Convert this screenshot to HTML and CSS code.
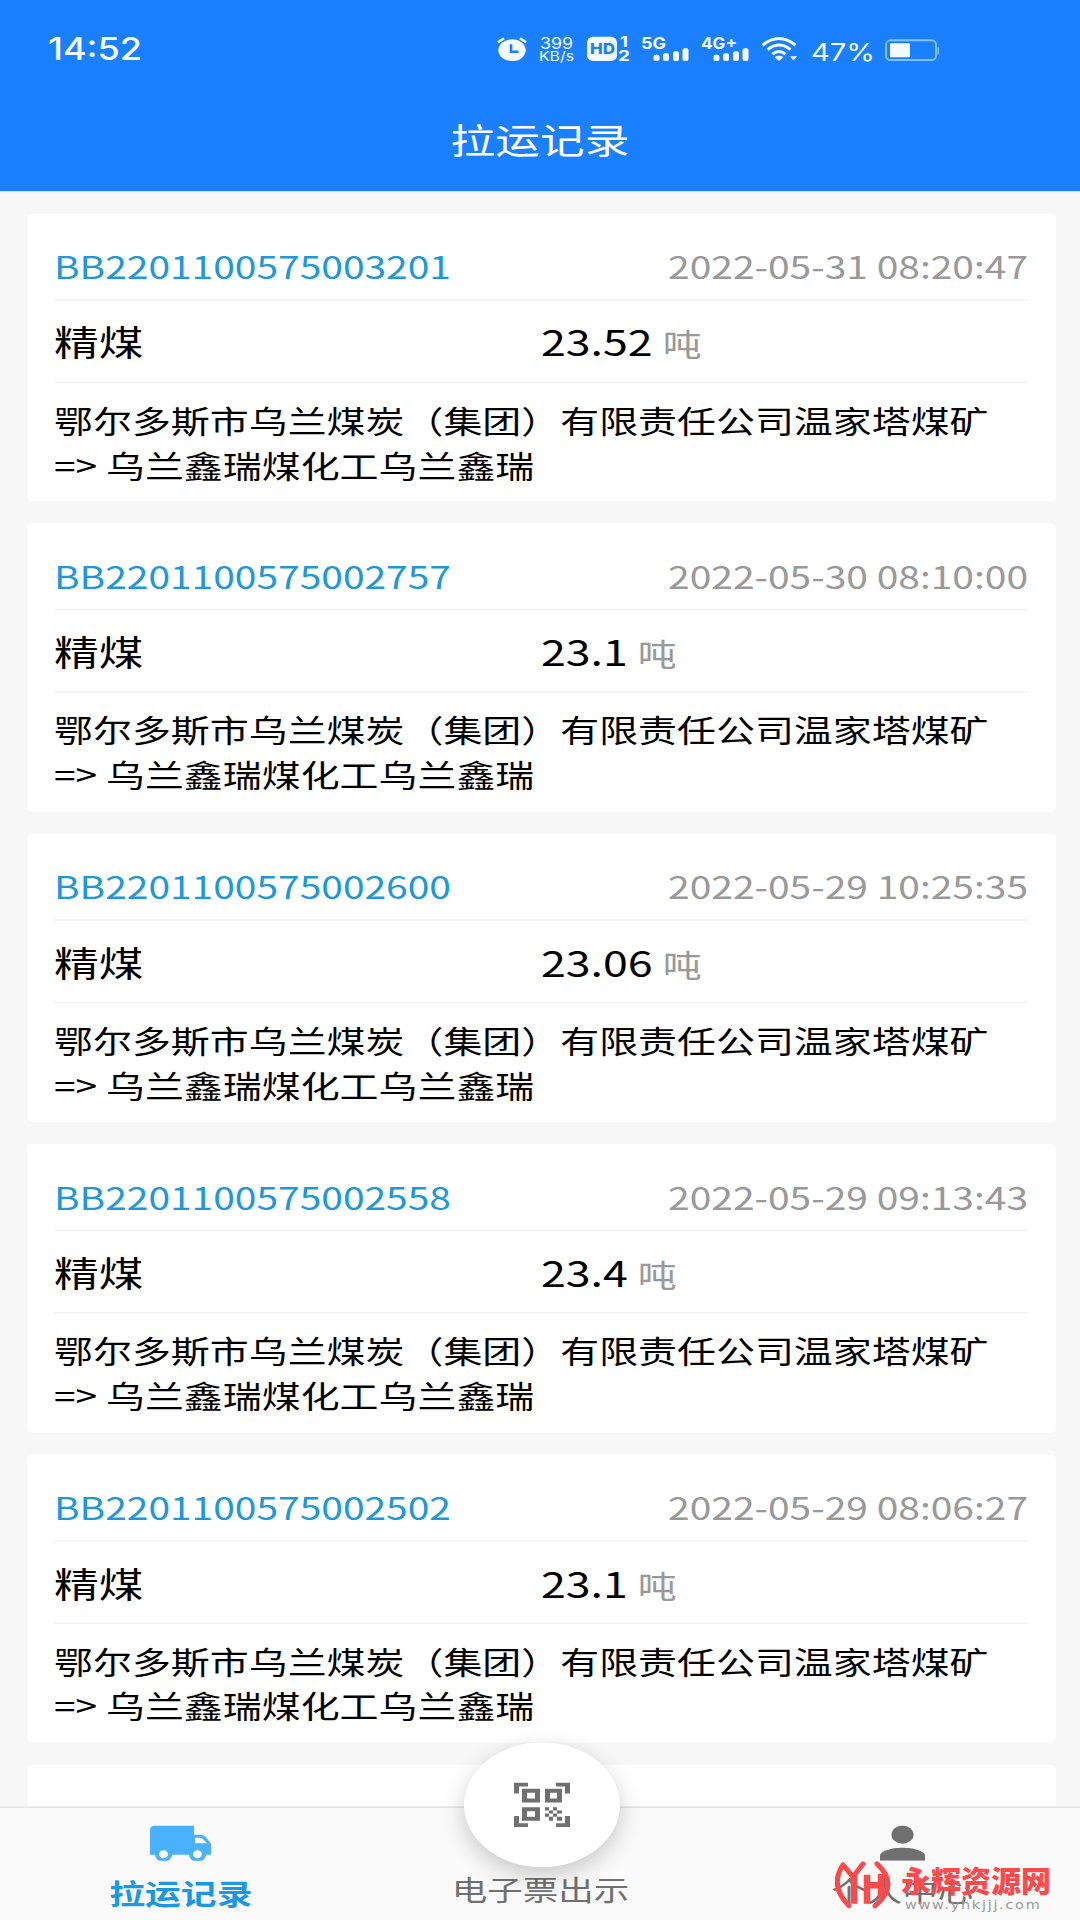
FILE: index.html
```html
<!DOCTYPE html>
<html lang="zh-CN">
<head>
<meta charset="utf-8">
<title>拉运记录</title>
<link rel="stylesheet" href="styles.css">
</head>
<body>
<div class="viewport">
<div class="screen">
  <header class="header">
    <div class="status">
      <svg class="clock" width="100" height="31" viewBox="0 0 100 25" preserveAspectRatio="none"><text x="0" y="23.5" font-size="31" textLength="94" lengthAdjust="spacingAndGlyphs">14:52</text></svg>
      <svg width="30" height="31" viewBox="0 0 30 25" preserveAspectRatio="none"><ellipse cx="15" cy="13.5" rx="13.7" ry="11"/><path class="line" d="M1 5.5 7 1.5M29 5.5 23 1.5" stroke-width="2.6"/><path class="cut" d="M14 7.500v7.500h7.500" stroke-width="2.600"/></svg>
      <svg width="36" height="31" viewBox="0 0 36 25" preserveAspectRatio="none"><text x="1" y="11.800" font-size="15.500" textLength="33" lengthAdjust="spacingAndGlyphs">399</text><text x="0" y="24.300" font-size="13.500" textLength="35" lengthAdjust="spacingAndGlyphs">KB/s</text></svg>
      <svg width="43" height="31" viewBox="0 0 43 25" preserveAspectRatio="none"><rect width="30" height="24.500" rx="6"/><text class="blue" x="3" y="17.700" font-size="15" textLength="25" lengthAdjust="spacingAndGlyphs">HD</text><text class="bold" x="33" y="10.500" font-size="14" textLength="8" lengthAdjust="spacingAndGlyphs">1</text><text class="bold" x="31" y="24" font-size="14" textLength="12" lengthAdjust="spacingAndGlyphs">2</text></svg>
      <svg width="47" height="31" viewBox="0 0 47 25" preserveAspectRatio="none"><text class="bold" x="-1" y="12.500" font-size="16" textLength="25" lengthAdjust="spacingAndGlyphs">5G</text><rect x="11.500" y="18" width="6" height="6.500" rx="2"/><rect x="21" y="16.500" width="6" height="8" rx="2"/><rect x="31" y="14.500" width="6" height="10" rx="2"/><rect x="40.500" y="11.500" width="6" height="13" rx="2"/></svg>
      <svg width="48" height="31" viewBox="0 0 48 25" preserveAspectRatio="none"><text class="bold" x="0" y="12.500" font-size="16" textLength="36" lengthAdjust="spacingAndGlyphs">4G+</text><rect x="12.500" y="18" width="6" height="6.500" rx="2"/><rect x="22" y="16.500" width="6" height="8" rx="2"/><rect x="32" y="14.500" width="6" height="10" rx="2"/><rect x="41.500" y="11.500" width="6" height="13" rx="2"/></svg>
      <svg width="39" height="31" viewBox="0 0 39 25" preserveAspectRatio="none"><path class="line" d="M1.500 8.500Q18-5 34.500 8.500M6.500 13Q18 3.500 29.500 13M11.500 17.500Q18 12 24.500 17.500" stroke-width="3"/><path d="M13.500 20.500Q18 17.500 22.500 20.500L18 24.500ZM29 19.500h7l-3.500 4.500z"/></svg>
      <svg width="61" height="31" viewBox="0 0 61 25" preserveAspectRatio="none"><text x="-1" y="24.500" font-size="25" textLength="64" lengthAdjust="spacingAndGlyphs">47%</text></svg>
      <svg width="55" height="31" viewBox="0 0 55 25" preserveAspectRatio="none"><rect class="case" x="1" y="3.500" width="50" height="20" rx="4.500"/><rect x="5" y="6.500" width="20" height="14" rx="1"/><path class="nub" d="M52.500 10.500h1.500v7h-1.500z"/></svg>
    </div>
    <h1 class="title">拉运记录</h1>
  </header>

  <main class="list">
    <article class="card">
      <div class="row head"><span class="code">BB2201100575003201</span><time class="date">2022-05-31 08:20:47</time></div>
      <div class="row goods"><span>精煤</span><span>23.52 <small class="unit">吨</small></span></div>
      <div class="route"><p>鄂尔多斯市乌兰煤炭（集团）有限责任公司温家塔煤矿</p><p>=&gt; 乌兰鑫瑞煤化工乌兰鑫瑞</p></div>
    </article>
    <article class="card">
      <div class="row head"><span class="code">BB2201100575002757</span><time class="date">2022-05-30 08:10:00</time></div>
      <div class="row goods"><span>精煤</span><span>23.1 <small class="unit">吨</small></span></div>
      <div class="route"><p>鄂尔多斯市乌兰煤炭（集团）有限责任公司温家塔煤矿</p><p>=&gt; 乌兰鑫瑞煤化工乌兰鑫瑞</p></div>
    </article>
    <article class="card">
      <div class="row head"><span class="code">BB2201100575002600</span><time class="date">2022-05-29 10:25:35</time></div>
      <div class="row goods"><span>精煤</span><span>23.06 <small class="unit">吨</small></span></div>
      <div class="route"><p>鄂尔多斯市乌兰煤炭（集团）有限责任公司温家塔煤矿</p><p>=&gt; 乌兰鑫瑞煤化工乌兰鑫瑞</p></div>
    </article>
    <article class="card">
      <div class="row head"><span class="code">BB2201100575002558</span><time class="date">2022-05-29 09:13:43</time></div>
      <div class="row goods"><span>精煤</span><span>23.4 <small class="unit">吨</small></span></div>
      <div class="route"><p>鄂尔多斯市乌兰煤炭（集团）有限责任公司温家塔煤矿</p><p>=&gt; 乌兰鑫瑞煤化工乌兰鑫瑞</p></div>
    </article>
    <article class="card">
      <div class="row head"><span class="code">BB2201100575002502</span><time class="date">2022-05-29 08:06:27</time></div>
      <div class="row goods"><span>精煤</span><span>23.1 <small class="unit">吨</small></span></div>
      <div class="route"><p>鄂尔多斯市乌兰煤炭（集团）有限责任公司温家塔煤矿</p><p>=&gt; 乌兰鑫瑞煤化工乌兰鑫瑞</p></div>
    </article>
    <article class="card"></article>
  </main>

  <nav class="tabs">
    <a class="tab active">
      <svg width="61" height="44" viewBox="0 0 61 35" preserveAspectRatio="none"><path fill-rule="evenodd" d="M5 0H44V9H51Q54 9 56 11.500L61 18V29H56A8 6.500 0 0 1 39 29H22A8 6.500 0 0 1 5 29H0V4.500Q0 0 5 0ZM45 12V17.500H57L52.500 13Q51.500 12 50 12ZM9 28.500a4.500 4 0 1 0 9 0a4.500 4 0 1 0-9 0M43 28.500a4.500 4 0 1 0 9 0a4.500 4 0 1 0-9 0"/></svg>
      <span>拉运记录</span>
    </a>
    <a class="tab">
      <i class="icon-space"></i>
      <span>电子票出示</span>
      <b class="scan">
        <svg width="56" height="56" viewBox="0 0 56 56"><path fill-rule="evenodd" d="M0 0H14V5H5V14H0ZM42 0H56V14H51V5H42ZM0 42H5V51H14V56H0ZM51 42H56V56H42V51H51ZM8 8H26V25H8ZM13 13V20H21V13ZM31 8H48V25H31ZM36 13V20H43V13ZM8 31H26V48H8ZM13 36V43H21V36ZM31 31h4v4h-4zM39 31h4v4h-4zM35 35h4v4h-4zM43 35h5v4h-5zM31 39h4v4h-4zM39 39h4v4h-4zM35 43h4v5h-4zM43 43h5v5h-5z"/></svg>
      </b>
    </a>
    <a class="tab me">
      <svg width="45" height="44" viewBox="0 0 45 35" preserveAspectRatio="none"><ellipse cx="22.500" cy="9" rx="11" ry="9"/><path d="M0 35V30C0 25 12 22 22.500 22S45 25 45 30V35Z"/></svg>
      <span>个人中心</span>
    </a>
  </nav>

  <div class="watermark">
    <svg width="56" height="60" viewBox="0 0 56 48" preserveAspectRatio="none"><path d="M8 4Q-6 25 14 45M8 4 18 16 28 3M42 3Q65 24 40 45"/><path class="stem" d="M19 15V43M32 14V43M32 24.500H46M46 13V36"/></svg>
    <div class="wm-text"><strong>永辉资源网</strong><span>www.yhkjjj.com</span></div>
  </div>
</div>
</div>
</body>
</html>
```
FILE: styles.css
```css
* { box-sizing: border-box; }
body { margin: 0; background: #f7f7f7; font-family: "Noto Sans CJK SC", sans-serif; }
.viewport { width: 1080px; height: 1920px; overflow: hidden; }

/* 1080x2400 phone canvas fitted to a 1920px tall viewport */
.screen {
  position: relative;
  width: 1080px;
  height: 2400px;
  transform: scaleY(.8);
  transform-origin: 0 0;
  display: flex;
  flex-direction: column;
  overflow: hidden;
  background: #f7f7f7;
}

.header { flex: none; height: 239px; background: #1b80ff; color: #fff; }
.status { display: flex; height: 112px; padding: 46px 0 0 48px; gap: 12px; }
.status svg { flex: none; fill: #f3fbff; overflow: visible; font-family: Inter, sans-serif; }
.status .clock { margin-right: 337px; font-weight: 500; }
.status .line { fill: none; stroke: #f3fbff; }
.status .cut { fill: none; stroke: #1b80ff; }
.status .blue { fill: #1b80ff; font-weight: 800; }
.status .bold { font-weight: 700; }
.status .case { fill: none; stroke: #86bfff; stroke-width: 2; }
.status .nub { fill: #86bfff; }
.title { margin: 0; height: 127px; line-height: 123px; text-align: center; font-size: 44.7px; font-weight: 400; }

.list { flex: 1; min-height: 0; overflow: hidden; padding: 27.500px 24px 0 27px; display: flex; flex-direction: column; gap: 27.500px; }
.card { flex: none; height: 360.400px; padding: 27px 28px 0 27px; border-radius: 6px; background: #fff; }
.row { display: flex; align-items: center; border-bottom: 2px solid #f3f3f3; }
.head { height: 82px; padding-bottom: 4px; justify-content: space-between; font-size: 38.950px; }
.code { color: #2098d8; }
.date { color: #999; }
.goods { height: 103px; padding-bottom: 1px; font-size: 44.700px; color: #000; }
.goods span { width: 50%; }
.unit { font-size: 38.900px; color: #999; }
.route { padding-top: 17px; font-size: 38.950px; line-height: 56px; color: #000; }
.route p { margin: 0; white-space: nowrap; }

.tabs { flex: none; height: 142px; display: flex; padding-left: 1px; border-top: 2px solid #e3e3e3; background: #fafafa; }
.tab { position: relative; width: 361px; display: flex; flex-direction: column; align-items: center; padding-top: 22px; font-size: 35.500px; color: #707070; }
.tab svg { fill: currentColor; }
.tab span { margin-top: 11px; line-height: 52px; }
.icon-space { height: 42px; }
.me { left: 2px; }
.active { font-size: 35.800px; font-weight: 700; color: #1c98e3; }
.active span { margin-top: 13px; }
.active svg { fill: #49b1ff; }
.scan { position: absolute; left: 103px; top: -82px; width: 156px; height: 156px; border-radius: 50%; background: #fff; display: flex; align-items: center; justify-content: center; box-shadow: 0 10px 26px rgba(0,0,0,.2); }

.watermark { position: absolute; left: 835px; top: 2326px; display: flex; gap: 10px; }
.watermark svg { fill: none; stroke: #fb4a4b; stroke-width: 5; stroke-linecap: round; }
.watermark .stem { stroke-width: 6.500; stroke-linecap: butt; }
.wm-text { display: flex; flex-direction: column; width: 154px; }
.wm-text strong { font-size: 30px; line-height: 46px; font-weight: 900; color: #fb4a4b; transform: scaleY(1.25); white-space: nowrap; }
.wm-text span { padding-left: 4px; font-family: "DejaVu Sans", sans-serif; font-size: 14.500px; line-height: 18px; color: #999; letter-spacing: 1.700px; }
```
